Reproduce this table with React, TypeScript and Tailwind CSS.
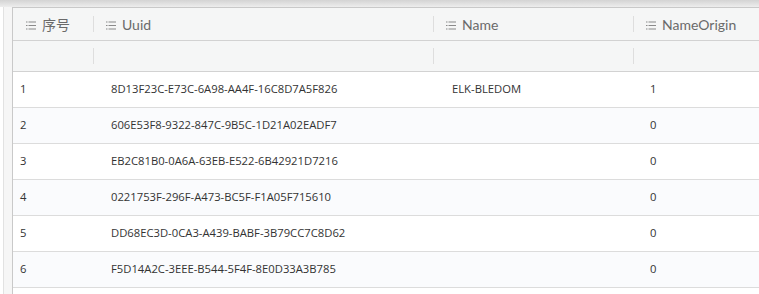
import React from "react";

const rows = [
  ["1", "8D13F23C-E73C-6A98-AA4F-16C8D7A5F826", "ELK-BLEDOM", "1"],
  ["2", "606E53F8-9322-847C-9B5C-1D21A02EADF7", "", "0"],
  ["3", "EB2C81B0-0A6A-63EB-E522-6B42921D7216", "", "0"],
  ["4", "0221753F-296F-A473-BC5F-F1A05F715610", "", "0"],
  ["5", "DD68EC3D-0CA3-A439-BABF-3B79CC7C8D62", "", "0"],
  ["6", "F5D14A2C-3EEE-B544-5F4F-8E0D33A3B785", "", "0"],
];

function ListIcon() {
  return (
    <svg width="10" height="9" viewBox="0 0 10 9" className="shrink-0">
      <rect x="0" y="0.5" width="1.5" height="1" fill="#8a8a8a" />
      <rect x="2.5" y="0.5" width="7.5" height="1" fill="#8a8a8a" />
      <rect x="0" y="4" width="1.5" height="1" fill="#8a8a8a" />
      <rect x="2.5" y="4" width="7.5" height="1" fill="#8a8a8a" />
      <rect x="0" y="7.5" width="1.5" height="1" fill="#8a8a8a" />
      <rect x="2.5" y="7.5" width="7.5" height="1" fill="#8a8a8a" />
    </svg>
  );
}

function HeadCell({ label, first }: { label: string; first?: boolean }) {
  return (
    <div className="flex items-center h-full">
      {!first && <div className="w-px h-[16px] bg-[#dedede]" />}
      <div className={`flex items-center gap-[6px] pt-[2px] ${first ? "pl-[13px]" : "pl-[12px]"}`}>
        <ListIcon />
        <span
          className="text-[14px] text-[#6a6a6a] leading-none"
          style={{ fontFamily: 'Lato, "Noto Sans CJK SC", sans-serif' }}
        >
          {label}
        </span>
      </div>
    </div>
  );
}

function FilterCell({ first }: { first?: boolean }) {
  return (
    <div className="flex items-center h-full">
      {!first && <div className="w-px h-[16px] bg-[#dedede]" />}
    </div>
  );
}

export default function App() {
  const cols = "grid grid-cols-[80px_340px_200px_1fr]";
  return (
    <div
      className="w-[759px] h-[294px] overflow-hidden bg-white flex flex-col"
      style={{ fontFamily: '"Open Sans", "Noto Sans CJK SC", sans-serif' }}
    >
      <div className="h-[7px] shrink-0 bg-gradient-to-b from-[#d4d4d4] to-[#ededed]" />
      <div className="flex flex-1 min-h-0">
        <div className="w-[12px] shrink-0 flex">
          <div className="w-[3px] bg-white" />
          <div className="w-px bg-[#e2e2e2]" />
          <div className="flex-1 bg-[#f6f6f6]" />
        </div>
        <div className="flex-1 border-l border-t border-[#c9c9c9] flex flex-col">
          <div className={`${cols} h-[33px] bg-[#f5f6f6] border-b border-[#d2d2d2]`}>
            <HeadCell label="序号" first />
            <HeadCell label="Uuid" />
            <HeadCell label="Name" />
            <HeadCell label="NameOrigin" />
          </div>
          <div className={`${cols} h-[31px] bg-[#f5f6f6] border-b border-[#d2d2d2]`}>
            <FilterCell first />
            <FilterCell />
            <FilterCell />
            <FilterCell />
          </div>
          {rows.map((r, i) => (
            <div
              key={i}
              className={`${cols} h-[36px] shrink-0 border-b border-[#dcdcdc] text-[11.25px] text-[#333] items-center ${
                i % 2 === 1 ? "bg-[#fafbfd]" : "bg-white"
              }`}
            >
              <div className="pl-[7px]">{r[0]}</div>
              <div className="pl-[18px]">{r[1]}</div>
              <div className="pl-[19px]">{r[2]}</div>
              <div className="pl-[17px]">{r[3]}</div>
            </div>
          ))}
        </div>
      </div>
    </div>
  );
}
